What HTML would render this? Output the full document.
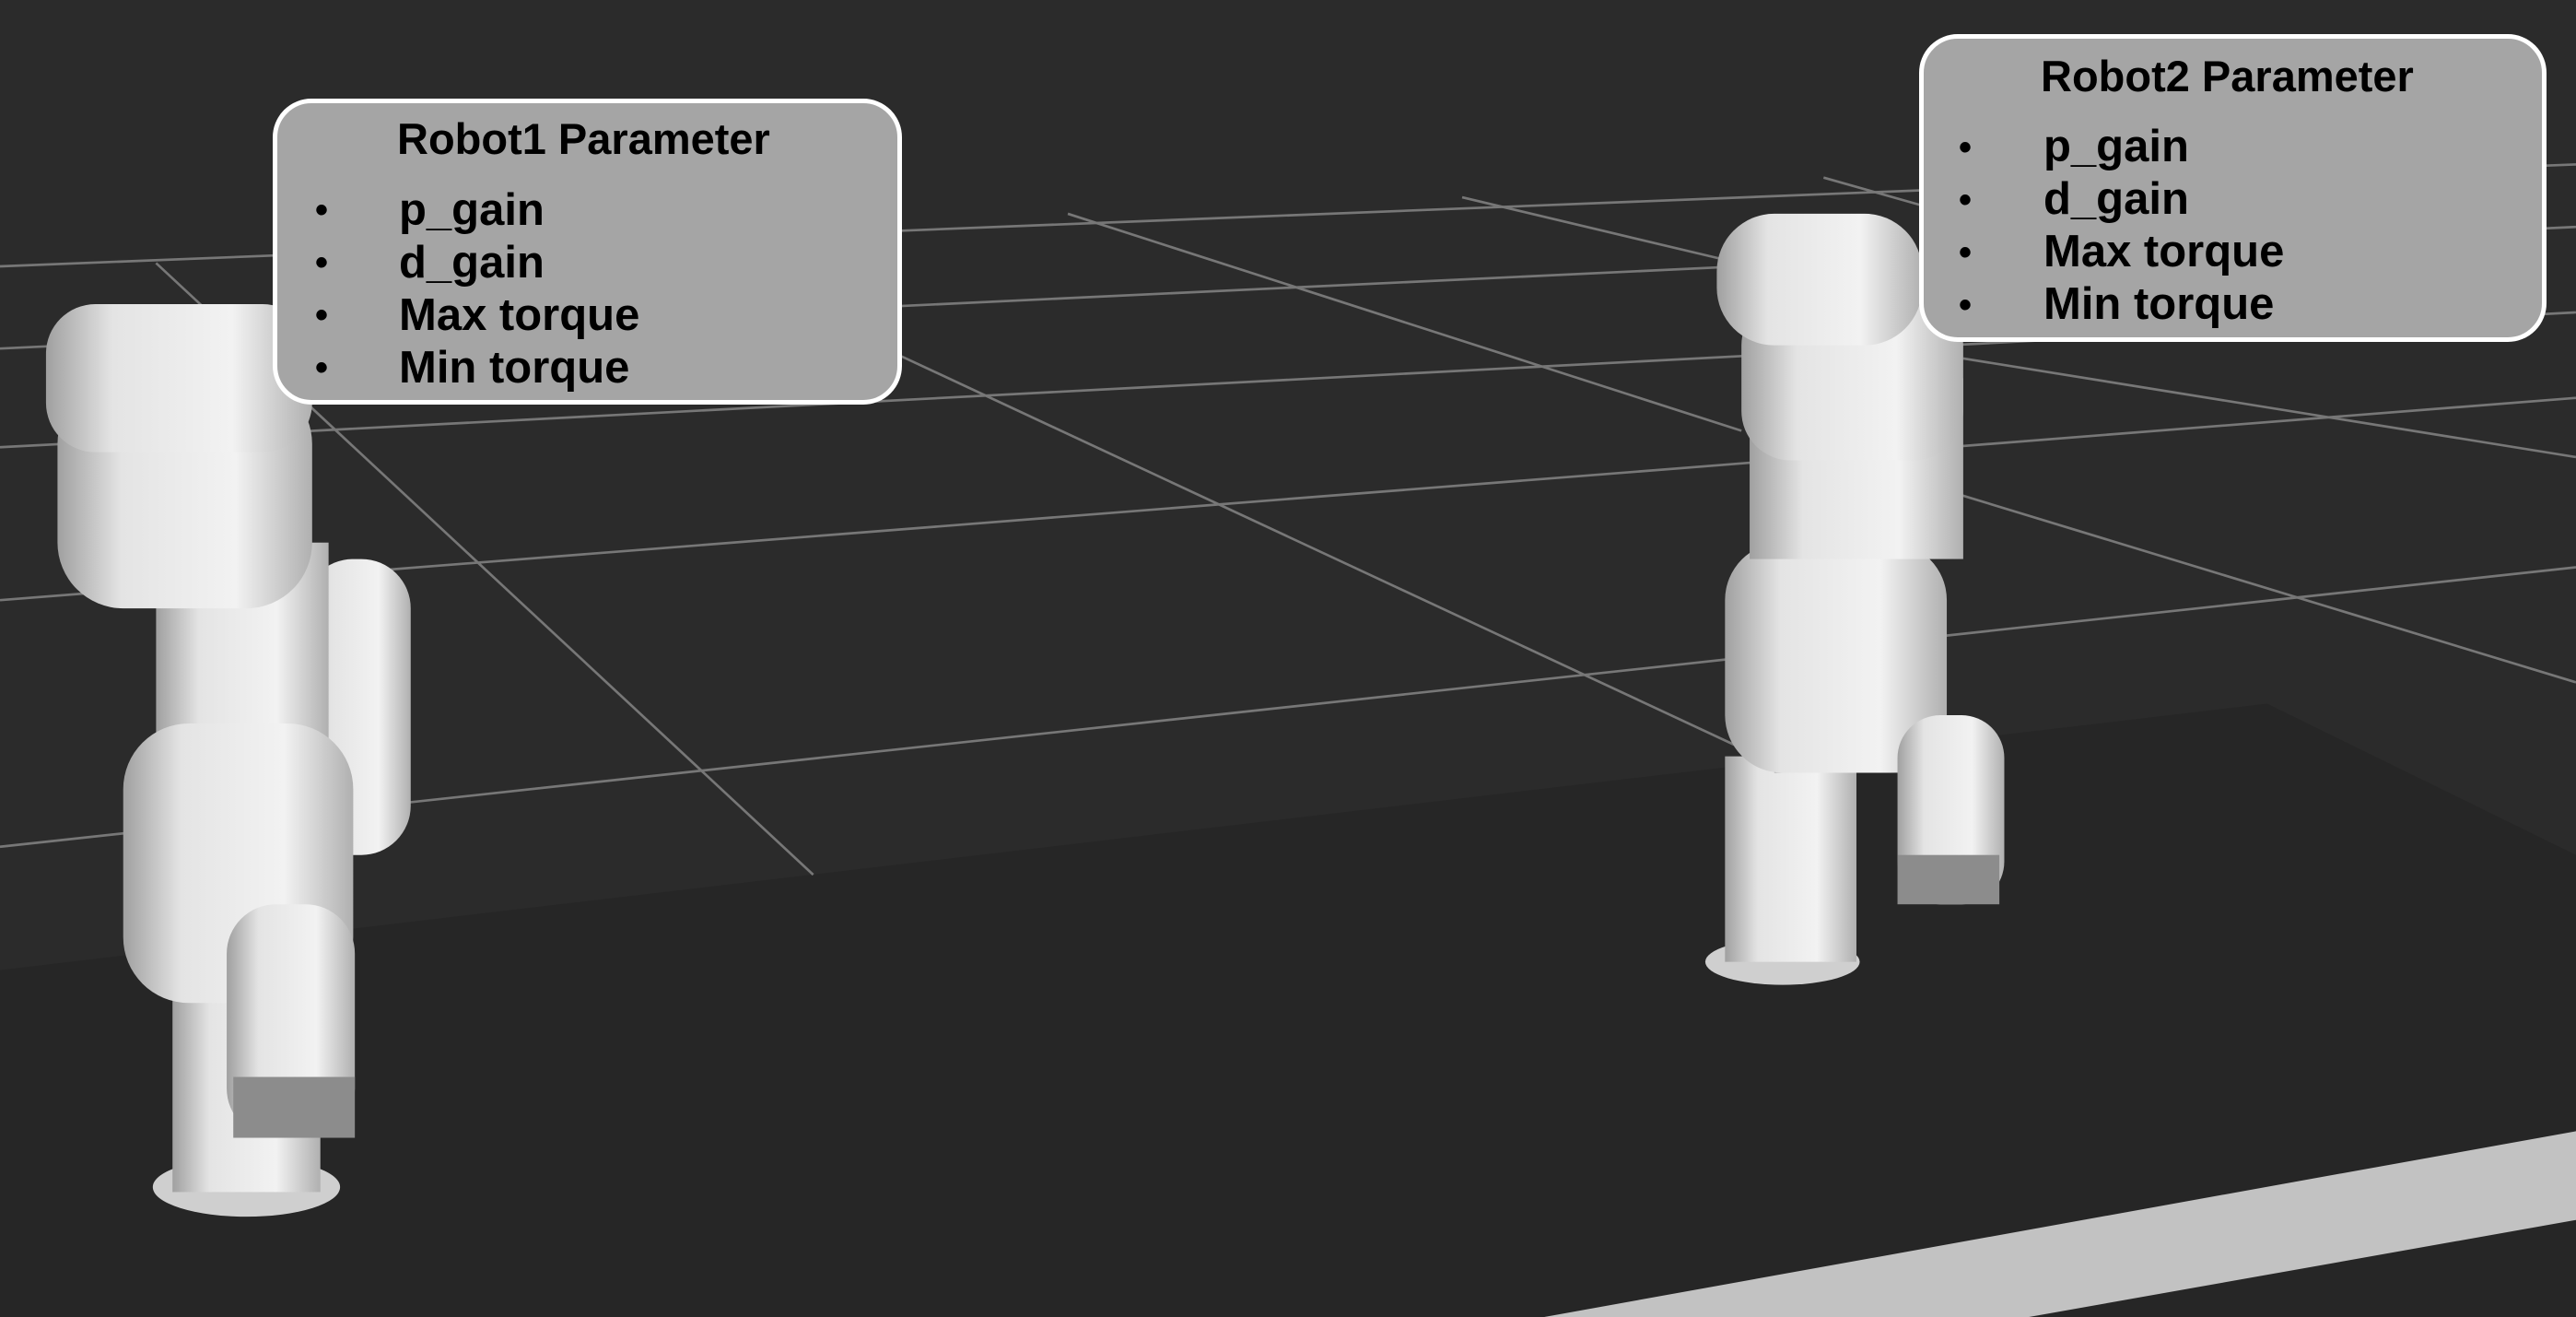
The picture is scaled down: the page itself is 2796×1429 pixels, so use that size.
<!DOCTYPE html>
<html><head><meta charset="utf-8"><style>
html,body{margin:0;padding:0;background:#2b2b2b;}
body{width:2796px;height:1429px;position:relative;overflow:hidden;font-family:"Liberation Sans","Noto Sans CJK KR",sans-serif;}
svg{position:absolute;left:0;top:0;}
.box{position:absolute;background:#a5a5a5;border:5px solid #fff;border-radius:42px;box-sizing:border-box;color:#000;}
.t{position:absolute;font-size:47px;font-weight:bold;white-space:nowrap;line-height:1;}
.i{position:absolute;font-size:49px;font-weight:bold;white-space:nowrap;line-height:1;}
.b{position:absolute;font-size:40px;font-weight:bold;line-height:1;}
</style></head><body>
<svg width="2796" height="1429" viewBox="0 0 1568 801" preserveAspectRatio="none">
<defs>
<linearGradient id="g" x1="0" x2="1" y1="0" y2="0">
<stop offset="0" stop-color="#a0a0a0"/><stop offset="0.25" stop-color="#e4e4e4"/><stop offset="0.7" stop-color="#f2f2f2"/><stop offset="1" stop-color="#b0b0b0"/></linearGradient>
</defs>
<rect width="1568" height="801" fill="#2b2b2b"/>
<polygon points="0,590 1380,428 1568,520 1568,801 0,801" fill="#262626"/>
<polygon points="940,801 1568,688 1568,742 1235,801" fill="#c2c2c2"/>
<g stroke="#777" stroke-width="1.5" fill="none">
<line x1="0" y1="162" x2="1568" y2="100"/>
<line x1="0" y1="212" x2="1568" y2="138"/>
<line x1="0" y1="272" x2="1568" y2="190"/>
<line x1="0" y1="365" x2="1568" y2="242"/>
<line x1="0" y1="515" x2="1568" y2="345"/>
<line x1="95" y1="160" x2="495" y2="532"/>
<line x1="545" y1="215" x2="1060" y2="455"/>
<line x1="650" y1="130" x2="1060" y2="262"/>
<line x1="890" y1="120" x2="1050" y2="158"/>
<line x1="1190" y1="300" x2="1568" y2="415"/>
<line x1="1195" y1="218" x2="1568" y2="278"/>
<line x1="1110" y1="108" x2="1170" y2="125"/>
</g>
<!-- robot1 -->
<g fill="url(#g)">
<ellipse cx="150" cy="722" rx="57" ry="18" fill="#cfcfcf"/>
<rect x="105" y="590" width="90" height="135"/>
<rect x="185" y="340" width="65" height="180" rx="30"/>
<rect x="95" y="330" width="105" height="200"/>
<rect x="35" y="230" width="155" height="140" rx="40"/>
<rect x="28" y="185" width="162" height="90" rx="30"/>
<rect x="75" y="440" width="140" height="170" rx="40"/>
<rect x="138" y="550" width="78" height="142" rx="30"/>
</g>
<rect x="142" y="655" width="74" height="37" fill="#8c8c8c"/>
<!-- robot2 -->
<g fill="url(#g)">
<ellipse cx="1085" cy="585" rx="47" ry="14" fill="#cfcfcf"/>
<rect x="1050" y="460" width="80" height="125"/>
<rect x="1080" y="405" width="85" height="65"/>
<rect x="1050" y="330" width="135" height="140" rx="35"/>
<rect x="1065" y="230" width="130" height="110"/>
<rect x="1060" y="180" width="135" height="100" rx="30"/>
<rect x="1045" y="130" width="125" height="80" rx="35"/>
<rect x="1155" y="435" width="65" height="115" rx="26"/>
</g>
<rect x="1155" y="520" width="62" height="30" fill="#8c8c8c"/>
</svg>

<div class="box" style="left:296px;top:107px;width:683px;height:332px;"></div>
<div class="t" style="left:431px;top:127px;">Robot1 Parameter</div>
<div class="b" style="left:342px;top:208px;">•</div><div class="i" style="left:433px;top:204px;">p_gain</div>
<div class="b" style="left:342px;top:265px;">•</div><div class="i" style="left:433px;top:261px;">d_gain</div>
<div class="b" style="left:342px;top:322px;">•</div><div class="i" style="left:433px;top:318px;">Max torque</div>
<div class="b" style="left:342px;top:379px;">•</div><div class="i" style="left:433px;top:375px;">Min torque</div>

<div class="box" style="left:2083px;top:37px;width:681px;height:334px;"></div>
<div class="t" style="left:2215px;top:59px;">Robot2 Parameter</div>
<div class="b" style="left:2126px;top:140px;">•</div><div class="i" style="left:2218px;top:135px;">p_gain</div>
<div class="b" style="left:2126px;top:197px;">•</div><div class="i" style="left:2218px;top:192px;">d_gain</div>
<div class="b" style="left:2126px;top:254px;">•</div><div class="i" style="left:2218px;top:249px;">Max torque</div>
<div class="b" style="left:2126px;top:311px;">•</div><div class="i" style="left:2218px;top:306px;">Min torque</div>
</body></html>
